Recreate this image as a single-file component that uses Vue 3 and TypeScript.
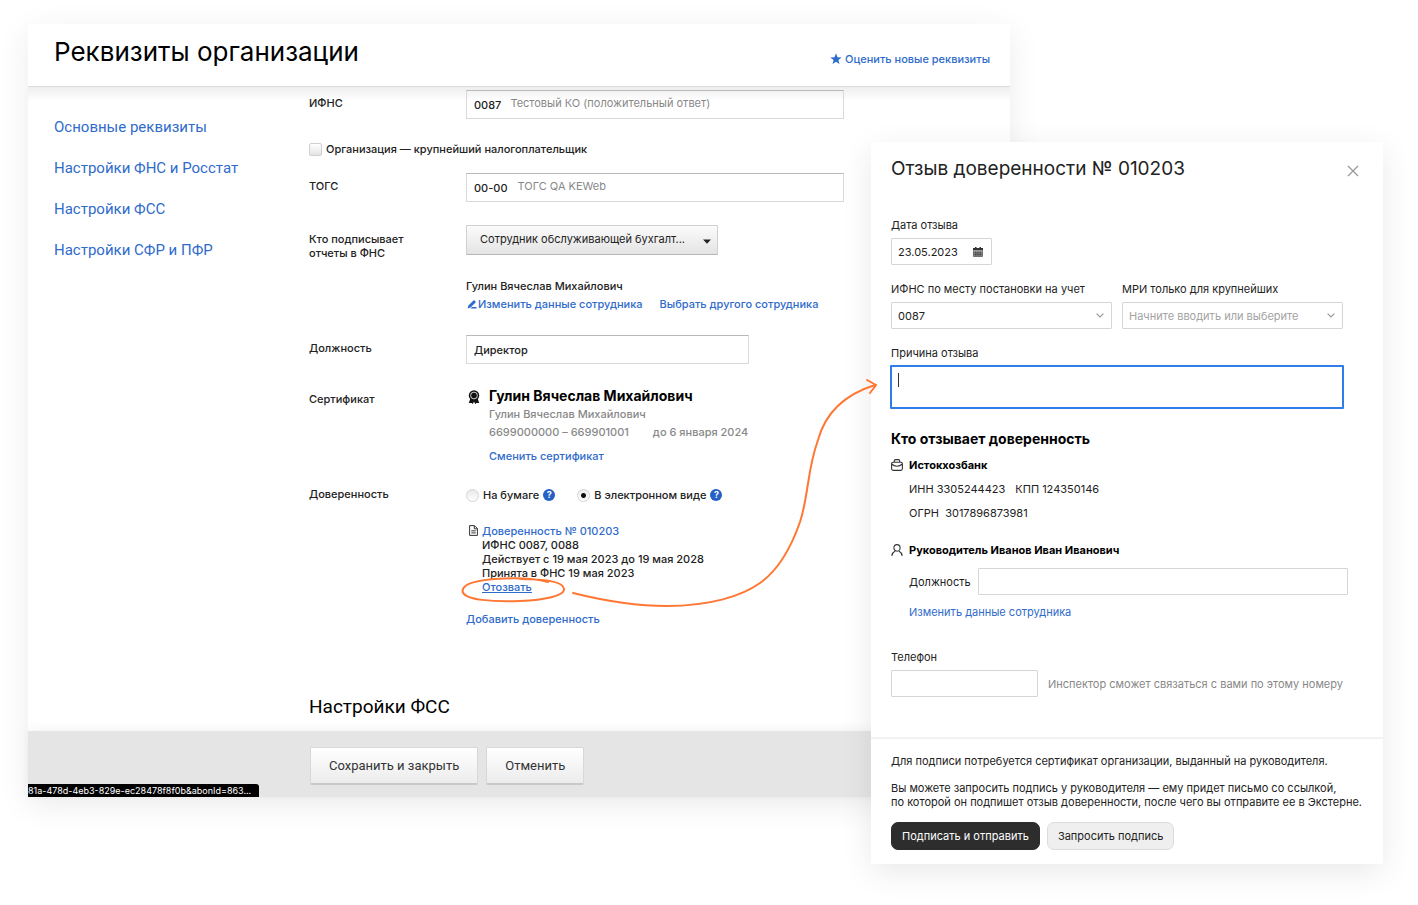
<script setup lang="ts">
import { ref } from 'vue'

interface NavItem {
  id: string
  label: string
}

const sections: NavItem[] = [
  { id: 'main', label: 'Основные реквизиты' },
  { id: 'fns', label: 'Настройки ФНС и Росстат' },
  { id: 'fss', label: 'Настройки ФСС' },
  { id: 'sfr', label: 'Настройки СФР и ПФР' },
]

const ifns = ref('0087')
const togs = ref('00-00')
const largest = ref(false)
const signer = ref('Сотрудник обслуживающей бухгалт...')
const position = ref('Директор')
const form = ref('electronic')

const revokeDate = ref('23.05.2023')
const revokeIfns = ref('0087')
const revokeMri = ref('')
const reason = ref('')
const headPosition = ref('')
const phone = ref('')

const chars = (value: string) => ({ width: `${value.length}ch` })
</script>

<template>
  <div class="stage">
    <main class="panel">
      <header class="panel-head">
        <h1>Реквизиты организации</h1>
        <a class="rate" href="#rate">
          <svg class="star" viewBox="0 0 12 12" aria-hidden="true">
            <path d="M6 .3 7.500 4.200l4.200.2-3.300 2.600 1.100 4.100L6 8.800l-3.500 2.300 1.100-4.100L.3 4.400l4.200-.2z" fill="currentColor" />
          </svg>
          <span>Оценить новые реквизиты</span>
        </a>
      </header>

      <div class="panel-body">
        <nav class="side">
          <a v-for="item in sections" :key="item.id" :href="'#' + item.id">{{ item.label }}</a>
        </nav>

        <form class="details" @submit.prevent>
          <div class="row">
            <label class="label" for="ifns">ИФНС</label>
            <div class="box wide">
              <input id="ifns" v-model="ifns" type="text" :style="chars(ifns)" />
              <span class="hint">Тестовый КО (положительный ответ)</span>
            </div>
          </div>

          <label class="check">
            <input v-model="largest" type="checkbox" />
            <span>Организация — крупнейший налогоплательщик</span>
          </label>

          <div class="row">
            <label class="label" for="togs">ТОГС</label>
            <div class="box wide">
              <input id="togs" v-model="togs" type="text" :style="chars(togs)" />
              <span class="hint">ТОГС QA KEWeb</span>
            </div>
          </div>

          <div class="row signer">
            <label class="label" for="signer">Кто подписывает<br />отчеты в ФНС</label>
            <div>
              <div class="drop">
                <select id="signer" v-model="signer">
                  <option>Сотрудник обслуживающей бухгалт...</option>
                </select>
                <svg class="drop-arrow" viewBox="0 0 8 5" aria-hidden="true">
                  <path d="M0 .5h8L4 4.800z" fill="#222" />
                </svg>
              </div>
              <p class="person">Гулин Вячеслав Михайлович</p>
              <p class="links">
                <a href="#edit">
                  <svg class="pencil" viewBox="0 0 10 10" aria-hidden="true">
                    <path d="M.6 9.400 1.400 6.600 7 1l2 2-5.500 5.500zM5 8h4.600v1.500H3.500z" fill="currentColor" />
                  </svg>Изменить данные сотрудника</a>
                <a href="#choose">Выбрать другого сотрудника</a>
              </p>
            </div>
          </div>

          <div class="row">
            <label class="label" for="position">Должность</label>
            <div class="box medium">
              <input id="position" v-model="position" class="grow" type="text" />
            </div>
          </div>

          <div class="row">
            <span class="label">Сертификат</span>
            <div class="cert">
              <svg class="badge" viewBox="0 0 12 14" aria-hidden="true">
                <path d="M2.400 8.500.8 13h2.800l1.200 1L6 11.500 7.200 14l1.200-1h2.800L9.600 8.500z" fill="#111" />
                <circle cx="6" cy="5.500" r="5.200" fill="#111" />
                <circle cx="6" cy="5.500" r="3.400" fill="none" stroke="#fff" stroke-width=".8" />
              </svg>
              <div>
                <p class="cert-name">Гулин Вячеслав Михайлович</p>
                <p class="muted">Гулин Вячеслав Михайлович</p>
                <p class="muted ids"><span>6699000000 – 669901001</span><span>до 6 января 2024</span></p>
                <p class="change"><a href="#cert">Сменить сертификат</a></p>
              </div>
            </div>
          </div>

          <div class="row">
            <span class="label flush">Доверенность</span>
            <div>
              <div class="radios" role="radiogroup" aria-label="Доверенность">
                <div class="radio">
                  <label><input v-model="form" type="radio" name="form" value="paper" />На бумаге</label>
                  <button type="button" class="help" aria-label="Справка: на бумаге">?</button>
                </div>
                <div class="radio">
                  <label><input v-model="form" type="radio" name="form" value="electronic" />В электронном виде</label>
                  <button type="button" class="help" aria-label="Справка: в электронном виде">?</button>
                </div>
              </div>
              <div class="poa">
                <svg class="doc" viewBox="0 0 9 11" aria-hidden="true">
                  <path d="M.6.6h4.900L8.400 3.500v6.900H.6zM5.300.8v3h3M2.300 5.800h4.400M2.300 7.900h4.400" fill="none" stroke="#333" />
                </svg>
                <div>
                  <p><a href="#poa">Доверенность № 010203</a></p>
                  <p>ИФНС 0087, 0088</p>
                  <p>Действует с 19 мая 2023 до 19 мая 2028</p>
                  <p>Принята в ФНС 19 мая 2023</p>
                  <p><a class="revoke" href="#revoke">Отозвать</a></p>
                </div>
              </div>
              <a class="add" href="#add">Добавить доверенность</a>
            </div>
          </div>

          <h2>Настройки ФСС</h2>
        </form>
      </div>

      <footer class="panel-foot">
        <button type="button">Сохранить и закрыть</button>
        <button type="button">Отменить</button>
        <div class="status">81a-478d-4eb3-829e-ec28478f8f0b&amp;abonId=863...</div>
      </footer>
    </main>

    <section class="modal" role="dialog" aria-labelledby="modal-title">
      <div class="modal-body">
        <header class="modal-head">
          <h2 id="modal-title">Отзыв доверенности № 010203</h2>
          <button type="button" class="close" aria-label="Закрыть">
            <svg viewBox="0 0 12 12" aria-hidden="true">
              <path d="M1 1l10 10M11 1 1 11" fill="none" stroke="#999" stroke-width="1.300" />
            </svg>
          </button>
        </header>

        <div class="field">
          <label for="date">Дата отзыва</label>
          <div class="input date">
            <input id="date" v-model="revokeDate" type="text" />
            <button type="button" aria-label="Открыть календарь">
              <svg viewBox="0 0 10 10" aria-hidden="true">
                <path d="M2 0h1.500v1h3V0H8v1h2v2.600H0V1h2z" fill="#333" />
                <path d="M.4 4.200h9.200v5.200H.4z" fill="#999" />
                <path d="M.5 3.600V9.500h9V3.600M1 5.900h8M1 7.700h8M2.800 4v5M5 4v5M7.200 4v5" fill="none" stroke="#333" stroke-width=".6" />
              </svg>
            </button>
          </div>
        </div>

        <div class="pair">
          <div class="field">
            <label for="r-ifns">ИФНС по месту постановки на учет</label>
            <div class="input combo">
              <select id="r-ifns" v-model="revokeIfns">
                <option>0087</option>
              </select>
              <svg viewBox="0 0 8 5" aria-hidden="true"><path d="M.6.6 4 4 7.400.6" fill="none" stroke="#999" stroke-width="1.200" /></svg>
            </div>
          </div>
          <div class="field">
            <label for="r-mri">МРИ только для крупнейших</label>
            <div class="input combo">
              <select id="r-mri" v-model="revokeMri" class="empty">
                <option value="">Начните вводить или выберите</option>
              </select>
              <svg viewBox="0 0 8 5" aria-hidden="true"><path d="M.6.6 4 4 7.400.6" fill="none" stroke="#999" stroke-width="1.200" /></svg>
            </div>
          </div>
        </div>

        <div class="field">
          <label for="reason">Причина отзыва</label>
          <div class="reason">
            <textarea id="reason" v-model="reason"></textarea>
            <span class="caret"></span>
          </div>
        </div>

        <h3>Кто отзывает доверенность</h3>
        <div class="who">
          <svg viewBox="0 0 12 12" aria-hidden="true">
            <path d="M3.300 3.200V2Q3.300.6 4.700.6h2.600q1.400 0 1.400 1.400v1.200M2.200 3.200h7.600q1.600 0 1.600 1.600V9.800q0 1.600-1.600 1.600H2.200Q.6 11.400.6 9.800V4.800Q.6 3.200 2.200 3.200zM.6 5Q3 7.200 6 7.200T11.400 5" fill="none" stroke="#333" stroke-width="1.100" />
          </svg>
          <div>
            <p class="strong">Истокхозбанк</p>
            <p class="req"><span>ИНН 3305244423</span><span>КПП 124350146</span></p>
            <p class="req">ОГРН&nbsp; 3017896873981</p>
          </div>
        </div>
        <div class="who head-person">
          <svg viewBox="0 0 12 12" aria-hidden="true">
            <path d="M6 .6a3.100 3.300 0 0 1 0 6.600A3.100 3.300 0 0 1 6 .6zM.8 11.800Q1.400 8.300 4.200 7M11.200 11.800Q10.600 8.300 7.800 7" fill="none" stroke="#333" stroke-width="1.100" />
          </svg>
          <div class="grow">
            <p class="strong">Руководитель Иванов Иван Иванович</p>
            <div class="head-position">
              <label for="head-position">Должность</label>
              <input id="head-position" v-model="headPosition" class="input" type="text" />
            </div>
            <p><a href="#edit-head">Изменить данные сотрудника</a></p>
          </div>
        </div>

        <div class="field">
          <label for="phone">Телефон</label>
          <div class="phone">
            <input id="phone" v-model="phone" class="input" type="tel" />
            <span>Инспектор сможет связаться с вами по этому номеру</span>
          </div>
        </div>
      </div>

      <footer class="modal-foot">
        <p>Для подписи потребуется сертификат организации, выданный на руководителя.</p>
        <p>Вы можете запросить подпись у руководителя — ему придет письмо со ссылкой,<br />по которой он подпишет отзыв доверенности, после чего вы отправите ее в Экстерне.</p>
        <div class="actions">
          <button type="button" class="primary">Подписать и отправить</button>
          <button type="button">Запросить подпись</button>
        </div>
      </footer>
    </section>

    <svg class="pointer" viewBox="0 0 430 240" aria-hidden="true">
      <g fill="none" stroke="#ff7733" stroke-width="2" stroke-linecap="round">
        <path d="M88 212C66 206 8 207 3 219C-2 231 40 232 60 231C84 230 105 226 104 219C103 210 76 209 60 209" />
        <path d="M113 223C145 231 178 236 207 236C250 236 282 226 300 213C320 199 333 172 340 152C349 124 347 100 358 70C364 48 380 26 415 15" />
        <path d="M407 10L416 15L410 23" />
      </g>
    </svg>
  </div>
</template>

<style>
body {
  margin: 0;
  background: #fff;
}
</style>

<style scoped>
.stage {
  position: relative;
  min-height: 905px;
  box-sizing: border-box;
  padding: 24px 408px 0 28px;
  overflow: hidden;
  font-family: Inter, Roboto, sans-serif;
  font-size: 11px;
  line-height: 14px;
  color: #222;
}

h1, h2, h3, p {
  margin: 0;
}

h1, h2 {
  font-weight: 400;
}

a {
  color: #2f6bcb;
  text-decoration: none;
}

input, select, textarea, button {
  font: inherit;
  color: inherit;
  margin: 0;
  box-sizing: border-box;
}

.grow {
  flex: 1;
  min-width: 0;
}

.panel {
  background: #fff;
  box-shadow: 0 8px 30px rgba(0, 0, 0, 0.08);
}

.panel-head {
  display: flex;
  justify-content: space-between;
  align-items: center;
  height: 62px;
  padding: 0 20px 0 26px;
  border-bottom: 1px solid #dcdcdc;
}

.panel-head h1 {
  font-size: 26px;
  line-height: 32px;
  padding-bottom: 6px;
  color: #000;
}

.rate {
  display: flex;
  align-items: center;
  gap: 3px;
  padding-top: 8px;
  font-weight: 500;
}

.star {
  width: 12px;
  height: 12px;
}

.panel-body {
  display: grid;
  grid-template-columns: 255px 1fr;
  padding: 3px 26px 12px;
  background: linear-gradient(#eee, #fff 14px);
}

.side {
  display: flex;
  flex-direction: column;
  align-items: flex-start;
  gap: 21px;
  padding-top: 27px;
  font-family: Roboto, sans-serif;
  font-size: 15px;
  line-height: 20px;
}

.details {
  font-weight: 500;
}

.row {
  display: grid;
  grid-template-columns: 157px 1fr;
  margin-bottom: 22px;
}

.label {
  padding-top: 6px;
}

.label.flush {
  padding-top: 0;
}

.box {
  display: flex;
  align-items: center;
  gap: 8px;
  height: 29px;
  box-sizing: border-box;
  padding: 0 7px;
  border: 1px solid #d9d9d9;
  border-top-color: #b8b8b8;
}

.box input {
  padding: 0;
  border: 0;
  background: none;
  outline: none;
}

.wide {
  max-width: 378px;
}

.medium {
  max-width: 283px;
}

.hint {
  color: #888;
  font-weight: 400;
  padding-bottom: 3px;
}

.check {
  display: flex;
  align-items: center;
  gap: 4px;
  height: 16px;
  margin-bottom: 16px;
}

.check input {
  appearance: none;
  width: 13px;
  height: 13px;
  border: 1px solid #d0d0d0;
  border-radius: 2px;
  background: linear-gradient(#fff, #e4e4e4);
}

.row.signer {
  margin-top: 23px;
}

.signer .label {
  padding-top: 7px;
}

.drop {
  position: relative;
  width: 252px;
  margin-bottom: 22px;
}

.drop select {
  display: block;
  appearance: none;
  width: 100%;
  height: 30px;
  padding: 0 20px 2px 13px;
  border: 1px solid #d0d0d0;
  border-bottom-color: #b5b5b5;
  border-radius: 1px;
  background: linear-gradient(#fbfbfb, #e4e4e4);
  font-weight: 400;
}

.drop-arrow {
  position: absolute;
  right: 7px;
  top: 14px;
  width: 8px;
  height: 5px;
}

.person, .links {
  line-height: 18px;
}

.links {
  display: flex;
  gap: 17px;
}

.pencil {
  width: 10px;
  height: 10px;
  margin: 0 1px -1px 1px;
}

.cert {
  display: flex;
  gap: 9px;
  line-height: 18px;
  padding-top: 1px;
}

.badge {
  width: 12px;
  height: 14px;
  margin: 3px 0 0 2px;
}

.cert-name {
  font-size: 14px;
  font-weight: 700;
  color: #000;
}

.muted {
  color: #888;
}

.ids {
  display: flex;
  gap: 24px;
}

.change {
  padding-top: 6px;
}

.radios {
  display: flex;
  gap: 22px;
  height: 16px;
  margin-bottom: 21px;
}

.radio, .radio label {
  display: flex;
  align-items: center;
  gap: 4px;
}

.radio input {
  appearance: none;
  width: 13px;
  height: 13px;
  border: 1px solid #d4d4d4;
  border-radius: 50%;
  background: linear-gradient(#e8e8e8, #fff);
}

.radio input:checked {
  background: radial-gradient(circle, #111 0 2px, transparent 3px), linear-gradient(#eee, #fff);
}

.help {
  width: 12px;
  height: 12px;
  padding: 0;
  border: 0;
  border-radius: 50%;
  background: #2560c4;
  color: #fff;
  font-size: 9px;
  font-weight: 700;
  line-height: 12px;
}

.poa {
  display: flex;
  gap: 4px;
  margin-bottom: 17px;
}

.doc {
  width: 9px;
  height: 11px;
  margin: 1px 0 0 3px;
}

.revoke {
  text-decoration: underline;
}

.add {
  display: block;
  line-height: 16px;
}

.details h2 {
  margin-top: 68px;
  font-family: Roboto, sans-serif;
  font-size: 19px;
  line-height: 24px;
  color: #000;
}

.panel-foot {
  position: relative;
  display: flex;
  gap: 8px;
  padding: 16px 26px 12px 282px;
  background: #e5e5e5;
  box-shadow: 0 -2px 10px rgba(0, 0, 0, 0.05);
}

.panel-foot button {
  height: 38px;
  padding: 0 18px;
  border: 1px solid #d8d8d8;
  border-bottom: 2px solid #c9c9c9;
  border-radius: 2px;
  background: linear-gradient(#fff, #ececec);
  font-family: Roboto, sans-serif;
  font-size: 13px;
  color: #333;
}

.status {
  position: absolute;
  left: 0;
  bottom: 0;
  padding: 0 8px 0 0;
  line-height: 13px;
  border-top-right-radius: 3px;
  background: #000;
  color: #fff;
  font-size: 9px;
  white-space: nowrap;
}

.modal {
  position: absolute;
  top: 142px;
  right: 35px;
  width: 512px;
  background: #fff;
  box-shadow: 0 8px 30px rgba(0, 0, 0, 0.09);
}

.modal-body {
  padding: 14px 40px 40px 20px;
  border-bottom: 2px solid #f2f2f2;
}

.modal-head {
  display: flex;
  justify-content: space-between;
  align-items: center;
  height: 26px;
  margin-bottom: 36px;
}

.modal-head h2 {
  font-size: 19px;
  line-height: 26px;
}

.close {
  width: 12px;
  height: 12px;
  margin: 4px -16px 0 0;
  padding: 0;
  border: 0;
  background: none;
}

.close svg {
  display: block;
}

.field {
  display: flex;
  flex-direction: column;
  gap: 6px;
  margin-bottom: 17px;
}

.input {
  height: 27px;
  box-sizing: border-box;
  border: 1px solid #d6d6d6;
  border-radius: 1px;
  background: #fff;
}

.date {
  display: flex;
  align-items: center;
  width: 101px;
  padding: 0 8px 0 6px;
}

.date input {
  flex: 1;
  min-width: 0;
  padding: 0;
  border: 0;
}

.date button {
  width: 10px;
  height: 10px;
  padding: 0;
  border: 0;
  background: none;
}

.date svg {
  display: block;
}

.pair {
  display: grid;
  grid-template-columns: 1fr 1fr;
  gap: 10px;
}

.combo {
  position: relative;
}

.combo select {
  appearance: none;
  display: block;
  width: 100%;
  height: 100%;
  padding: 0 24px 0 6px;
  border: 0;
  background: none;
}

.combo .empty {
  color: #a3a3a3;
}

.combo svg {
  position: absolute;
  right: 7px;
  top: 10px;
  width: 8px;
  height: 5px;
}

.reason {
  position: relative;
  margin: -1px -1px 3px;
}

.reason textarea {
  display: block;
  width: 100%;
  height: 44px;
  padding: 5px 6px;
  border: 2px solid #2f7de8;
  border-radius: 1px;
  outline: none;
  resize: none;
}

.caret {
  position: absolute;
  left: 8px;
  top: 8px;
  width: 1px;
  height: 14px;
  background: #333;
}

h3 {
  font-size: 14px;
  line-height: 20px;
  font-weight: 700;
  color: #000;
}

.who {
  display: flex;
  gap: 6px;
  padding-top: 8px;
}

.who svg {
  flex: none;
  width: 12px;
  height: 12px;
  margin-top: 2px;
}

.who p {
  line-height: 16px;
}

.who .strong {
  font-weight: 700;
  color: #000;
}

.req {
  display: flex;
  gap: 10px;
  padding-top: 8px;
}

.head-person {
  padding-top: 21px;
}

.head-position {
  display: flex;
  align-items: center;
  gap: 7px;
  margin: 10px -5px 9px 0;
}

.head-position input {
  flex: 1;
  min-width: 0;
}

.head-person + .field {
  margin: 30px 0 0;
}

.phone {
  display: flex;
  align-items: center;
  gap: 10px;
  white-space: nowrap;
}

.phone input {
  width: 147px;
}

.phone span {
  color: #888;
}

.modal-foot {
  padding: 15px 20px 14px;
}

.modal-foot p {
  margin-bottom: 13px;
}

.actions {
  display: flex;
  gap: 7px;
}

.actions button {
  height: 28px;
  padding: 0 10px;
  border: 1px solid #dcdcdc;
  border-radius: 7px;
  background: #efefef;
}

.actions .primary {
  border-color: #2d2d2d;
  background: #2d2d2d;
  color: #fff;
}

.pointer {
  position: absolute;
  left: 460px;
  top: 370px;
  width: 430px;
  height: 240px;
  pointer-events: none;
}
</style>
